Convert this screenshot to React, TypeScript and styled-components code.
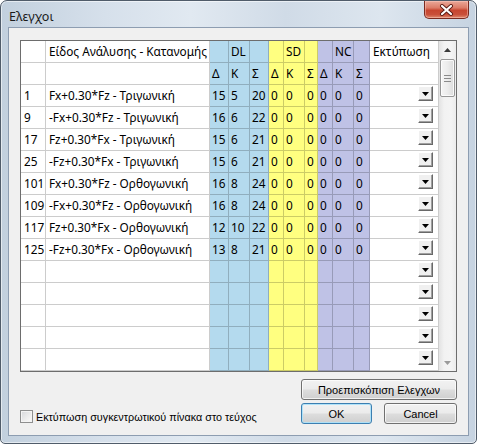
import React from "react";
import styled, { createGlobalStyle } from "styled-components";

const FONT = `"Noto Sans", "DejaVu Sans", sans-serif`;
const FORM_FONT = `"Liberation Sans", Arial, sans-serif`;

const Global = createGlobalStyle`
  html, body { margin: 0; padding: 0; background: #ffffff; }
  body { font-family: ${FONT}; }
  * { box-sizing: border-box; }
`;

type Tint = "none" | "blue" | "yellow" | "purple";
const tintBg: Record<Tint, string> = {
  none: "#ffffff",
  blue: "#b4daee",
  yellow: "#ffff80",
  purple: "#bfc2e6",
};

const Window = styled.div`
  width: 477px;
  height: 444px;
  display: flex;
  flex-direction: column;
  border: 1px solid #505c6a;
  border-radius: 7px 7px 5px 5px;
  padding: 0 7px 7px 7px;
  background: linear-gradient(
    90deg,
    #c2d0de 0%,
    #d6e0eb 22%,
    #e1e9f1 40%,
    #d0dbe7 60%,
    #dde6ef 80%,
    #c6d3e1 100%
  );
  box-shadow: inset 0 0 0 1px rgba(255, 255, 255, 0.55);
  font-family: ${FONT};
  font-size: 11.8px;
  color: #000;
`;

const TitleBar = styled.div`
  height: 28px;
  display: flex;
  justify-content: space-between;
  align-items: flex-start;
`;

const Title = styled.div`
  padding: 7px 0 0 1px;
  font-size: 12.5px;
  color: #1b1b1b;
`;

const CloseButton = styled.div`
  width: 45px;
  height: 18px;
  border: 1px solid #7a2a20;
  border-top: none;
  border-radius: 0 0 5px 5px;
  background: linear-gradient(
    180deg,
    #eaa899 0%,
    #dc7c68 40%,
    #c7452f 55%,
    #c9503a 80%,
    #e08a6e 100%
  );
  box-shadow: inset 0 0 0 1px rgba(255, 210, 200, 0.45);
  display: flex;
  align-items: center;
  justify-content: center;
`;

const Client = styled.div`
  flex: 1;
  display: flex;
  flex-direction: column;
  background: #f0f0f0;
  border: 1px solid #8d9db1;
`;

const GridFrame = styled.div`
  margin: 12px 11px 0;
  height: 332px;
  border: 1px solid #6d6d6d;
  background: #f0f0f0;
  display: flex;
`;

const Table = styled.div`
  width: 418px;
  display: grid;
  grid-template-columns: 25px 164px 19px 21px 19px 15px 21px 13px 15px 21px 16px 69px;
  grid-auto-rows: 22px;
  align-content: start;
  overflow: hidden;
`;

const Cell = styled.div<{ $tint: Tint; $pad?: number }>`
  background: ${(p) => tintBg[p.$tint]};
  border-right: 1px solid rgba(0, 0, 0, 0.2);
  border-bottom: 1px solid rgba(0, 0, 0, 0.2);
  padding-left: ${(p) => p.$pad ?? 2}px;
  display: flex;
  align-items: center;
  white-space: nowrap;
  overflow: hidden;
  font-size: 11.8px;
  line-height: 1;
`;

const PrintCell = styled(Cell)`
  justify-content: flex-end;
  align-items: flex-start;
  padding: 1px 5px 0 0;
`;

const DropButton = styled.div`
  width: 15px;
  height: 15px;
  background: #f0f0f0;
  border-top: 1px solid #ffffff;
  border-left: 1px solid #ffffff;
  border-right: 1px solid #696969;
  border-bottom: 1px solid #696969;
  box-shadow: inset -1px -1px 0 #a0a0a0;
  display: flex;
  align-items: center;
  justify-content: center;
`;

const ScrollBar = styled.div`
  width: 17px;
  display: flex;
  flex-direction: column;
  background: linear-gradient(90deg, #e3e3e3 0%, #f2f2f2 30%, #f4f4f4 70%, #ececec 100%);
`;

const ArrowBox = styled.div`
  height: 17px;
  display: flex;
  align-items: center;
  justify-content: center;
`;

const Thumb = styled.div`
  margin: 1px 1px 0 1px;
  height: 38px;
  border: 1px solid #979797;
  border-radius: 2px;
  background: linear-gradient(90deg, #f5f5f5 0%, #ececec 50%, #dcdcdc 100%);
  box-shadow: inset 0 0 0 1px rgba(255, 255, 255, 0.8);
  display: flex;
  align-items: center;
  justify-content: center;
`;

const Track = styled.div`
  flex: 1;
`;

const Footer = styled.div`
  display: flex;
  justify-content: space-between;
  align-items: flex-end;
  margin: 7px 11px 11px 11px;
  font-family: ${FORM_FONT};
  font-size: 11px;
`;

const CheckRow = styled.label`
  display: flex;
  align-items: center;
  gap: 3px;
  margin-bottom: 1px;
  font-size: 10.8px;
  color: #000;
`;

const CheckBox = styled.span`
  width: 13px;
  height: 13px;
  border: 1px solid #8e8f8f;
  background: linear-gradient(135deg, #d6d8db 0%, #eeeeee 60%, #fbfbfb 100%);
  box-shadow: inset 0 0 0 1px #f4f4f4;
`;

const ButtonColumn = styled.div`
  width: 156px;
  display: flex;
  flex-direction: column;
  gap: 3px;
`;

const ButtonRow = styled.div`
  display: flex;
  justify-content: space-between;
`;

const Button = styled.div<{ $width?: number; $default?: boolean }>`
  width: ${(p) => (p.$width ? `${p.$width}px` : "100%")};
  height: 21px;
  border: 1px solid ${(p) => (p.$default ? "#3c7fb1" : "#707070")};
  border-radius: 3px;
  background: linear-gradient(180deg, #f2f2f2 0%, #ebebeb 48%, #dddddd 52%, #cfcfcf 100%);
  box-shadow: inset 0 0 0 1px
    ${(p) => (p.$default ? "rgba(170, 225, 250, 0.9)" : "rgba(255, 255, 255, 0.7)")};
  display: flex;
  align-items: center;
  justify-content: center;
  color: #000;
`;

const DownGlyph = ({ color = "#000" }: { color?: string }) => (
  <svg width="7" height="4" viewBox="0 0 7 4">
    <polygon points="0,0 7,0 3.5,4" fill={color} />
  </svg>
);

const UpGlyph = () => (
  <svg width="7" height="4" viewBox="0 0 7 4">
    <polygon points="0,4 7,4 3.5,0" fill="#3a3a3a" />
  </svg>
);

const Grip = () => (
  <svg width="7" height="7" viewBox="0 0 7 7">
    <g stroke="#8a8a8a" strokeWidth="1">
      <line x1="0" y1="0.5" x2="7" y2="0.5" />
      <line x1="0" y1="3.5" x2="7" y2="3.5" />
      <line x1="0" y1="6.5" x2="7" y2="6.5" />
    </g>
  </svg>
);

const CloseX = () => (
  <svg width="15" height="12" viewBox="0 0 15 12">
    <path d="M3 2 L12 10 M12 2 L3 10" stroke="#5a1a12" strokeWidth="4" strokeLinecap="round" />
    <path d="M3 2 L12 10 M12 2 L3 10" stroke="#ffffff" strokeWidth="2.2" strokeLinecap="round" />
  </svg>
);

type Row = [string, string, number, number, number];
const rows: Row[] = [
  ["1", "Fx+0.30*Fz - Τριγωνική", 15, 5, 20],
  ["9", "-Fx+0.30*Fz - Τριγωνική", 16, 6, 22],
  ["17", "Fz+0.30*Fx - Τριγωνική", 15, 6, 21],
  ["25", "-Fz+0.30*Fx - Τριγωνική", 15, 6, 21],
  ["101", "Fx+0.30*Fz - Ορθογωνική", 16, 8, 24],
  ["109", "-Fx+0.30*Fz - Ορθογωνική", 16, 8, 24],
  ["117", "Fz+0.30*Fx - Ορθογωνική", 12, 10, 22],
  ["125", "-Fz+0.30*Fx - Ορθογωνική", 13, 8, 21],
];

const groupTints: Tint[] = ["blue", "blue", "blue", "yellow", "yellow", "yellow", "purple", "purple", "purple"];

const GroupCells = ({ values }: { values: (string | number)[] }) => (
  <>
    {groupTints.map((t, i) => (
      <Cell key={i} $tint={t}>
        {values[i]}
      </Cell>
    ))}
  </>
);

export default function App() {
  const empty = Array.from({ length: 5 });
  return (
    <>
      <Global />
      <Window>
        <TitleBar>
          <Title>Ελεγχοι</Title>
          <CloseButton>
            <CloseX />
          </CloseButton>
        </TitleBar>
        <Client>
          <GridFrame>
            <Table>
              <Cell $tint="none" />
              <Cell $tint="none" $pad={3}>
                Είδος Ανάλυσης - Κατανομής
              </Cell>
              <GroupCells values={["", "DL", "", "", "SD", "", "", "NC", ""]} />
              <Cell $tint="none" $pad={3}>
                Εκτύπωση
              </Cell>

              <Cell $tint="none" />
              <Cell $tint="none" />
              <GroupCells values={["Δ", "Κ", "Σ", "Δ", "Κ", "Σ", "Δ", "Κ", "Σ"]} />
              <Cell $tint="none" />

              {rows.map(([id, name, d, k, s]) => (
                <React.Fragment key={id}>
                  <Cell $tint="none" $pad={3}>
                    {id}
                  </Cell>
                  <Cell $tint="none" $pad={3}>
                    {name}
                  </Cell>
                  <GroupCells values={[d, k, s, 0, 0, 0, 0, 0, 0]} />
                  <PrintCell $tint="none">
                    <DropButton>
                      <DownGlyph />
                    </DropButton>
                  </PrintCell>
                </React.Fragment>
              ))}

              {empty.map((_, i) => (
                <React.Fragment key={`e${i}`}>
                  <Cell $tint="none" />
                  <Cell $tint="none" />
                  <GroupCells values={[]} />
                  <PrintCell $tint="none">
                    <DropButton>
                      <DownGlyph />
                    </DropButton>
                  </PrintCell>
                </React.Fragment>
              ))}
            </Table>
            <ScrollBar>
              <ArrowBox>
                <UpGlyph />
              </ArrowBox>
              <Thumb>
                <Grip />
              </Thumb>
              <Track />
              <ArrowBox>
                <DownGlyph color="#9a9a9a" />
              </ArrowBox>
            </ScrollBar>
          </GridFrame>
          <Footer>
            <CheckRow>
              <CheckBox />
              Εκτύπωση συγκεντρωτικού πίνακα στο τεύχος
            </CheckRow>
            <ButtonColumn>
              <Button>Προεπισκόπιση Ελεγχων</Button>
              <ButtonRow>
                <Button $width={71} $default>
                  OK
                </Button>
                <Button $width={73}>Cancel</Button>
              </ButtonRow>
            </ButtonColumn>
          </Footer>
        </Client>
      </Window>
    </>
  );
}
